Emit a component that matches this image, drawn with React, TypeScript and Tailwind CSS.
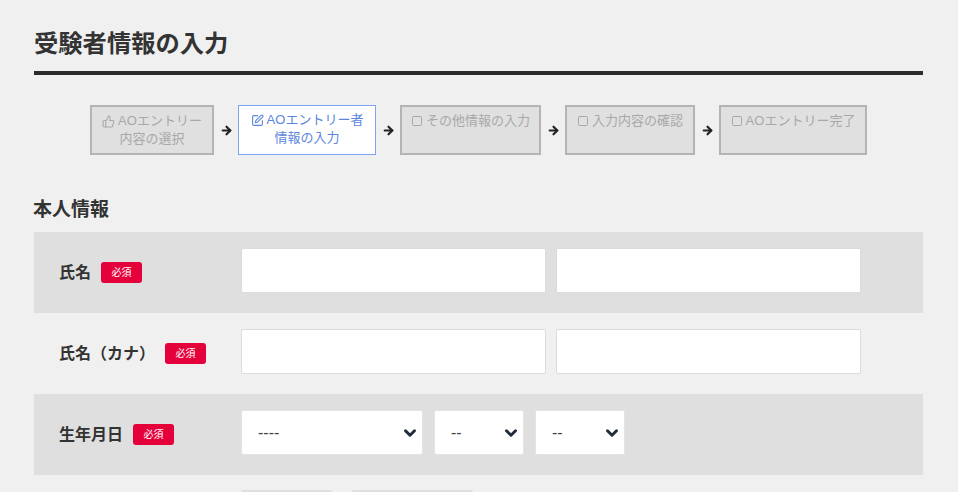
import { ChevronDown, PenSquare, Square, ThumbsUp, ArrowRight } from "lucide-react";

const font = "font-['Liberation_Sans','Noto_Sans_CJK_JP',sans-serif]";

const Arrow = () => (
  <div className="flex w-6 justify-center">
    <ArrowRight size={13} strokeWidth={4} className="text-[#222]" />
  </div>
);

const Step = ({ icon, lines, width, active }: { icon: React.ReactNode; lines: string[]; width: string; active?: boolean }) => (
  <div
    className={`${width} h-[50px] flex flex-col items-center pt-[5px] text-[13px] leading-[18px] border-2 ${
      active ? "bg-white border-[#7ba4f2] border-[1.5px] text-[#5b86dc]" : "bg-[#e0e0e0] border-[#b4b4b4] text-[#a8a8a8]"
    }`}
  >
    <div className="flex items-center gap-[3px]">
      {icon}
      <span>{lines[0]}</span>
    </div>
    {lines[1] && <div>{lines[1]}</div>}
  </div>
);

const Required = () => (
  <span className="w-[41px] h-[21px] rounded-[3px] bg-[#e4003a] text-white text-[10px] font-normal flex items-center justify-center">必須</span>
);

const Row = ({ label, gray, children }: { label: string; gray?: boolean; children: React.ReactNode }) => (
  <div className={`h-[81px] flex items-center ${gray ? "bg-[#dfdfdf]" : ""}`}>
    <div className="w-[207px] pl-[25px] flex items-center gap-[10px] text-[16px] font-bold text-[#333]">
      <span>{label}</span>
      <Required />
    </div>
    {children}
  </div>
);

const Input = () => <input className="w-[305px] h-[45px] bg-white border border-[#dcdcdc] rounded-[2px]" />;

const Select = ({ width, text }: { width: string; text: string }) => (
  <div className={`${width} relative`}>
    <select className="w-full h-[45px] appearance-none bg-white rounded-[2px] border border-[#e4e4e4] pl-4 text-[16px] text-[#444]">
      <option>{text}</option>
    </select>
    <ChevronDown size={18} strokeWidth={4} className="absolute right-[4px] top-[14px] text-[#222d3c] pointer-events-none" />
  </div>
);

export default function App() {
  return (
    <div className={`${font} w-[958px] h-[492px] overflow-hidden bg-[#f0f0f0] px-[34px] pt-[26px]`}>
      <h1 className="w-[889px] h-[49px] border-b-4 border-[#2b2b2b] text-[24.3px] leading-[36px] font-bold text-[#333]">
        受験者情報の入力
      </h1>

      <div className="mt-[30px] pl-[56px] flex items-center">
        <Step width="w-[124px]" icon={<ThumbsUp size={13} />} lines={["AOエントリー", "内容の選択"]} />
        <Arrow />
        <Step width="w-[138px]" active icon={<PenSquare size={13} />} lines={["AOエントリー者", "情報の入力"]} />
        <Arrow />
        <Step width="w-[141px]" icon={<Square size={12} />} lines={["その他情報の入力"]} />
        <Arrow />
        <Step width="w-[130px]" icon={<Square size={12} />} lines={["入力内容の確認"]} />
        <Arrow />
        <Step width="w-[148px]" icon={<Square size={12} />} lines={["AOエントリー完了"]} />
      </div>

      <h2 className="mt-[41px] -ml-[1px] text-[19px] leading-[27px] font-bold text-[#333]">本人情報</h2>

      <div className="mt-[9px] w-[889px]">
        <Row label="氏名" gray>
          <div className="flex gap-[10px] mb-[4px]"><Input /><Input /></div>
        </Row>
        <Row label="氏名（カナ）">
          <div className="flex gap-[10px] mb-[4px]"><Input /><Input /></div>
        </Row>
        <Row label="生年月日" gray>
          <div className="flex gap-[11px] mb-[4px]">
            <Select width="w-[182px]" text="----" />
            <Select width="w-[90px]" text="--" />
            <Select width="w-[90px]" text="--" />
          </div>
        </Row>
        <div className="pl-[207px] pt-[15px] flex gap-[20px]">
          <div className="w-[91px] h-[40px] bg-[#dfdfdf] rounded-[2px]" />
          <div className="w-[121px] h-[40px] bg-[#dfdfdf] rounded-[2px]" />
        </div>
      </div>
    </div>
  );
}
